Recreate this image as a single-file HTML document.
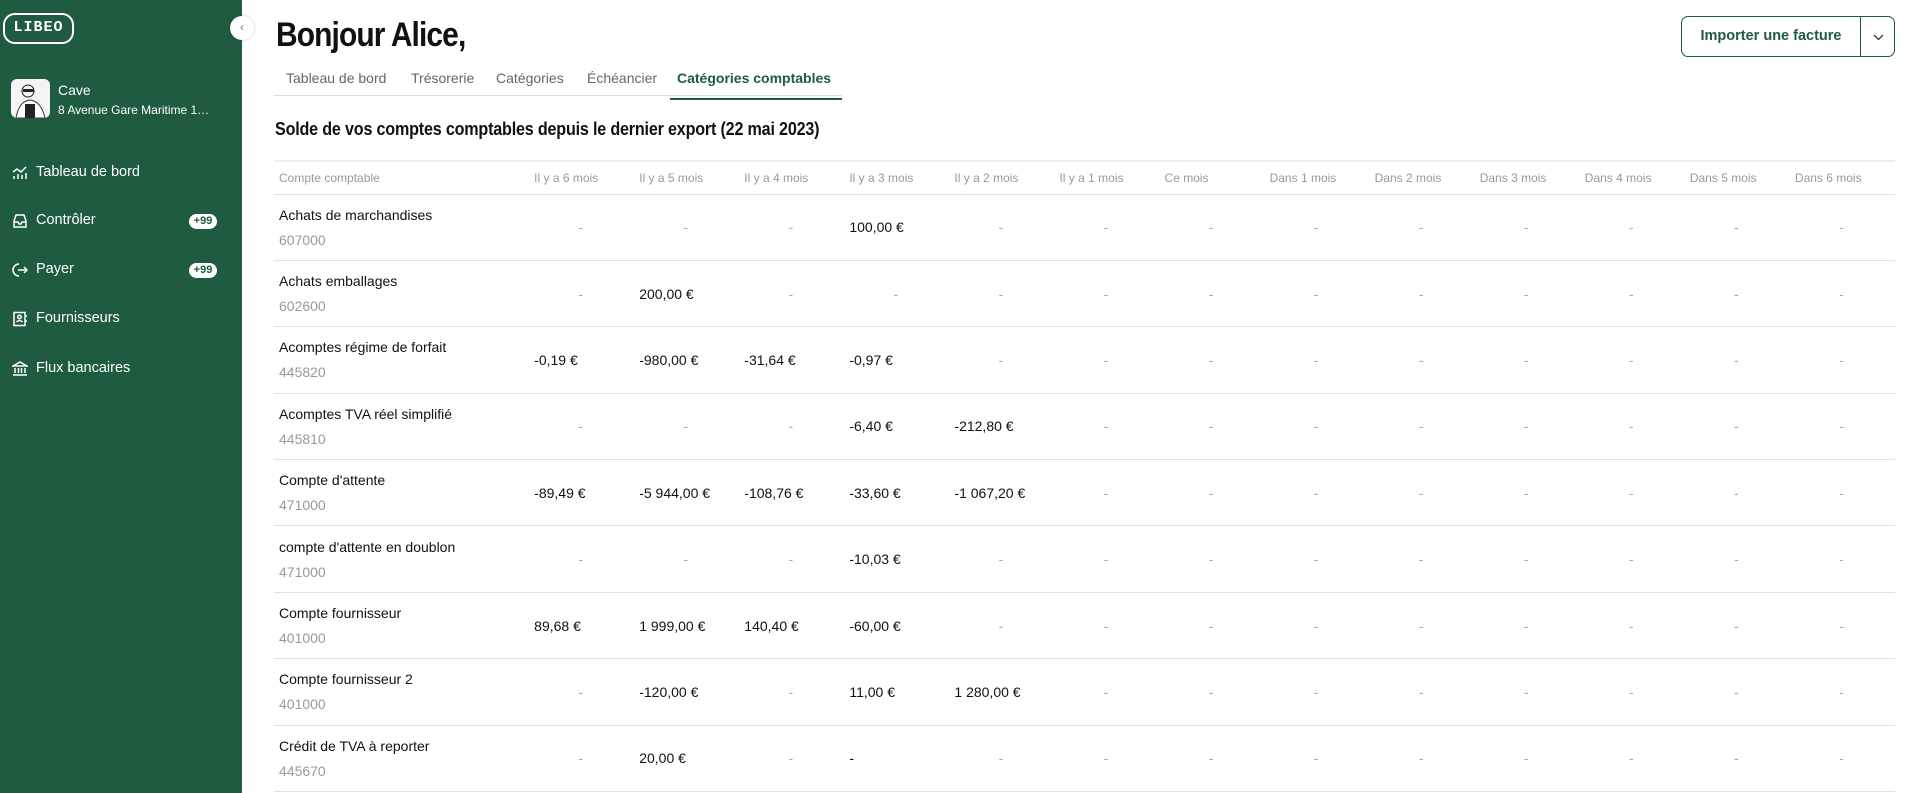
<!DOCTYPE html>
<html><head><meta charset="utf-8"><style>
*{box-sizing:border-box;margin:0;padding:0}
body{width:1920px;height:793px;overflow:hidden;background:#fff;font-family:"Liberation Sans",Arial,sans-serif;position:relative;color:#111}
.sb{position:absolute;left:0;top:0;width:242px;height:793px;background:#1e5b3f;color:#fff}
.logo{position:absolute;left:3px;top:13px;width:71px;height:31px;border:2.5px solid #fff;border-radius:12px;font-weight:bold;font-size:15px;letter-spacing:1px;text-align:center;line-height:26px;font-family:"Liberation Mono",monospace}
.col{position:absolute;left:230px;top:16px;width:24px;height:24px;border-radius:50%;background:#fff;box-shadow:0 0 3px rgba(0,0,0,.2);color:#777;font-size:12px;text-align:center;line-height:23px}
.av{position:absolute;left:11px;top:79px;width:39px;height:39px;border-radius:6px;background:#f4f4f4;overflow:hidden}
.nm{position:absolute;left:58px;top:82px;font-size:14px}
.ad{position:absolute;left:58px;top:103px;font-size:12px}
.nav{position:absolute;left:0;width:242px;height:24px;font-size:14.5px}
.nav svg{position:absolute;left:12px;top:5px}
.nav span.t{position:absolute;left:36px;top:4px}
.bd{position:absolute;left:189px;top:6px;width:28px;height:15px;border-radius:8px;background:#fff;color:#1e5b3f;font-size:11px;font-weight:bold;text-align:center;line-height:15px}
h1{position:absolute;left:276px;top:16px;font-size:34px;font-weight:bold;letter-spacing:-1px;transform:scaleX(.88);transform-origin:left}
.tabs{position:absolute;left:274px;top:66px;width:568px;height:30px;border-bottom:1px solid #ddd;font-size:14px;color:#666}
.tabs span{position:absolute;top:4px}
.tabs .a{color:#1e5b3f;font-weight:bold;border-bottom:2px solid #1e5b3f;height:30px;left:396px;width:172px;padding:0 7px;top:4px}
h2{position:absolute;left:275px;top:119px;font-size:18px;font-weight:bold;transform:scaleX(.895);transform-origin:left;letter-spacing:-.2px}
.btn{position:absolute;left:1681px;top:16px;width:214px;height:41px;border:1px solid #1e5b3f;border-radius:7px;color:#1e5b3f;font-weight:bold;font-size:14.5px}
.btn .l{position:absolute;left:0;top:0;width:179px;height:39px;line-height:39px;text-align:center;border-right:1px solid #1e5b3f}
.btn .r{position:absolute;left:180px;top:0;width:33px;height:39px}
table{position:absolute;left:274px;top:160px;border-collapse:collapse;table-layout:fixed;width:1621px;border-top:2px solid #eee}
td{border-bottom:1px solid #e2e2e2;font-size:14px;vertical-align:middle;padding:0 0 0 5px;white-space:nowrap}
tr.h td{height:33px;font-size:12px;color:#999}
tr.r td{height:66.4px}
td .c{display:block;color:#999;margin-top:9px}
td.d{color:#aaa;padding:0;text-align:center;padding-right:2px}
</style></head><body>
<div class="sb">
<div class="logo">LIBEO</div>
<div class="av"><svg width="39" height="39"><circle cx="17" cy="12" r="6" fill="none" stroke="#222"/><rect x="12" y="10" width="11" height="3" fill="#222"/><path d="M5 39 Q8 22 19 21 Q30 22 34 39Z" fill="#fff" stroke="#333"/><rect x="14" y="25" width="10" height="14" fill="#222"/></svg></div>
<div class="nm">Cave</div>
<div class="ad">8 Avenue Gare Maritime 1…</div>
<div class="nav" style="top:160px"><svg width="16" height="16" fill="none" stroke="#fff" stroke-width="1.5"><path d="M1 7l4-3 4 3 5-5"/><path d="M2 14v-3M6 14v-5M10 14v-4M14 14v-6"/></svg><span class="t">Tableau de bord</span></div>
<div class="nav" style="top:208px"><svg width="16" height="16" fill="none" stroke="#fff" stroke-width="1.5"><path d="M2 8l2-6h8l2 6v6H2z"/><path d="M2 9h4l1 2h2l1-2h4"/></svg><span class="t">Contrôler</span><span class="bd">+99</span></div>
<div class="nav" style="top:257px"><svg width="16" height="16" fill="none" stroke="#fff" stroke-width="1.5"><path d="M7 2A6 6 0 1 0 7 14"/><path d="M6 8h9M12 5l3 3-3 3"/></svg><span class="t">Payer</span><span class="bd">+99</span></div>
<div class="nav" style="top:306px"><svg width="16" height="16" fill="none" stroke="#fff" stroke-width="1.5"><rect x="2" y="1.5" width="11" height="13"/><circle cx="7.5" cy="6" r="1.8"/><path d="M4.5 11q3-3 6 0M14 4v2M14 9v2"/></svg><span class="t">Fournisseurs</span></div>
<div class="nav" style="top:356px"><svg width="16" height="16" fill="none" stroke="#fff" stroke-width="1.5"><path d="M1 5l7-4 7 4z"/><path d="M3 7v5M6.5 7v5M9.5 7v5M13 7v5M1 14h14"/></svg><span class="t">Flux bancaires</span></div>
</div>
<div class="col">‹</div>
<h1>Bonjour Alice,</h1>
<div class="tabs"><span style="left:12px">Tableau de bord</span><span style="left:137px">Trésorerie</span><span style="left:222px">Catégories</span><span style="left:313px">Échéancier</span><span class="a">Catégories comptables</span></div>
<h2>Solde de vos comptes comptables depuis le dernier export (22 mai 2023)</h2>
<div class="btn"><div class="l">Importer une facture</div><div class="r"><svg width="33" height="39" fill="none" stroke="#333" stroke-width="1.3"><path d="M12 18l4.5 4.5L21 18"/></svg></div></div>
<table>
<colgroup><col style="width:255px"><col span="13" style="width:105px"></colgroup>
<tr class="h"><td>Compte comptable</td><td>Il y a 6 mois</td><td>Il y a 5 mois</td><td>Il y a 4 mois</td><td>Il y a 3 mois</td><td>Il y a 2 mois</td><td>Il y a 1 mois</td><td>Ce mois</td><td>Dans 1 mois</td><td>Dans 2 mois</td><td>Dans 3 mois</td><td>Dans 4 mois</td><td>Dans 5 mois</td><td>Dans 6 mois</td></tr>
<tr class="r"><td>Achats de marchandises<span class="c">607000</span></td><td class="d">-</td><td class="d">-</td><td class="d">-</td><td>100,00 €</td><td class="d">-</td><td class="d">-</td><td class="d">-</td><td class="d">-</td><td class="d">-</td><td class="d">-</td><td class="d">-</td><td class="d">-</td><td class="d">-</td></tr>
<tr class="r"><td>Achats emballages<span class="c">602600</span></td><td class="d">-</td><td>200,00 €</td><td class="d">-</td><td class="d">-</td><td class="d">-</td><td class="d">-</td><td class="d">-</td><td class="d">-</td><td class="d">-</td><td class="d">-</td><td class="d">-</td><td class="d">-</td><td class="d">-</td></tr>
<tr class="r"><td>Acomptes régime de forfait<span class="c">445820</span></td><td>-0,19 €</td><td>-980,00 €</td><td>-31,64 €</td><td>-0,97 €</td><td class="d">-</td><td class="d">-</td><td class="d">-</td><td class="d">-</td><td class="d">-</td><td class="d">-</td><td class="d">-</td><td class="d">-</td><td class="d">-</td></tr>
<tr class="r"><td>Acomptes TVA réel simplifié<span class="c">445810</span></td><td class="d">-</td><td class="d">-</td><td class="d">-</td><td>-6,40 €</td><td>-212,80 €</td><td class="d">-</td><td class="d">-</td><td class="d">-</td><td class="d">-</td><td class="d">-</td><td class="d">-</td><td class="d">-</td><td class="d">-</td></tr>
<tr class="r"><td>Compte d'attente<span class="c">471000</span></td><td>-89,49 €</td><td>-5 944,00 €</td><td>-108,76 €</td><td>-33,60 €</td><td>-1 067,20 €</td><td class="d">-</td><td class="d">-</td><td class="d">-</td><td class="d">-</td><td class="d">-</td><td class="d">-</td><td class="d">-</td><td class="d">-</td></tr>
<tr class="r"><td>compte d'attente en doublon<span class="c">471000</span></td><td class="d">-</td><td class="d">-</td><td class="d">-</td><td>-10,03 €</td><td class="d">-</td><td class="d">-</td><td class="d">-</td><td class="d">-</td><td class="d">-</td><td class="d">-</td><td class="d">-</td><td class="d">-</td><td class="d">-</td></tr>
<tr class="r"><td>Compte fournisseur<span class="c">401000</span></td><td>89,68 €</td><td>1 999,00 €</td><td>140,40 €</td><td>-60,00 €</td><td class="d">-</td><td class="d">-</td><td class="d">-</td><td class="d">-</td><td class="d">-</td><td class="d">-</td><td class="d">-</td><td class="d">-</td><td class="d">-</td></tr>
<tr class="r"><td>Compte fournisseur 2<span class="c">401000</span></td><td class="d">-</td><td>-120,00 €</td><td class="d">-</td><td>11,00 €</td><td>1 280,00 €</td><td class="d">-</td><td class="d">-</td><td class="d">-</td><td class="d">-</td><td class="d">-</td><td class="d">-</td><td class="d">-</td><td class="d">-</td></tr>
<tr class="r"><td>Crédit de TVA à reporter<span class="c">445670</span></td><td class="d">-</td><td>20,00 €</td><td class="d">-</td><td>-</td><td class="d">-</td><td class="d">-</td><td class="d">-</td><td class="d">-</td><td class="d">-</td><td class="d">-</td><td class="d">-</td><td class="d">-</td><td class="d">-</td></tr>
</table>
</body></html>
